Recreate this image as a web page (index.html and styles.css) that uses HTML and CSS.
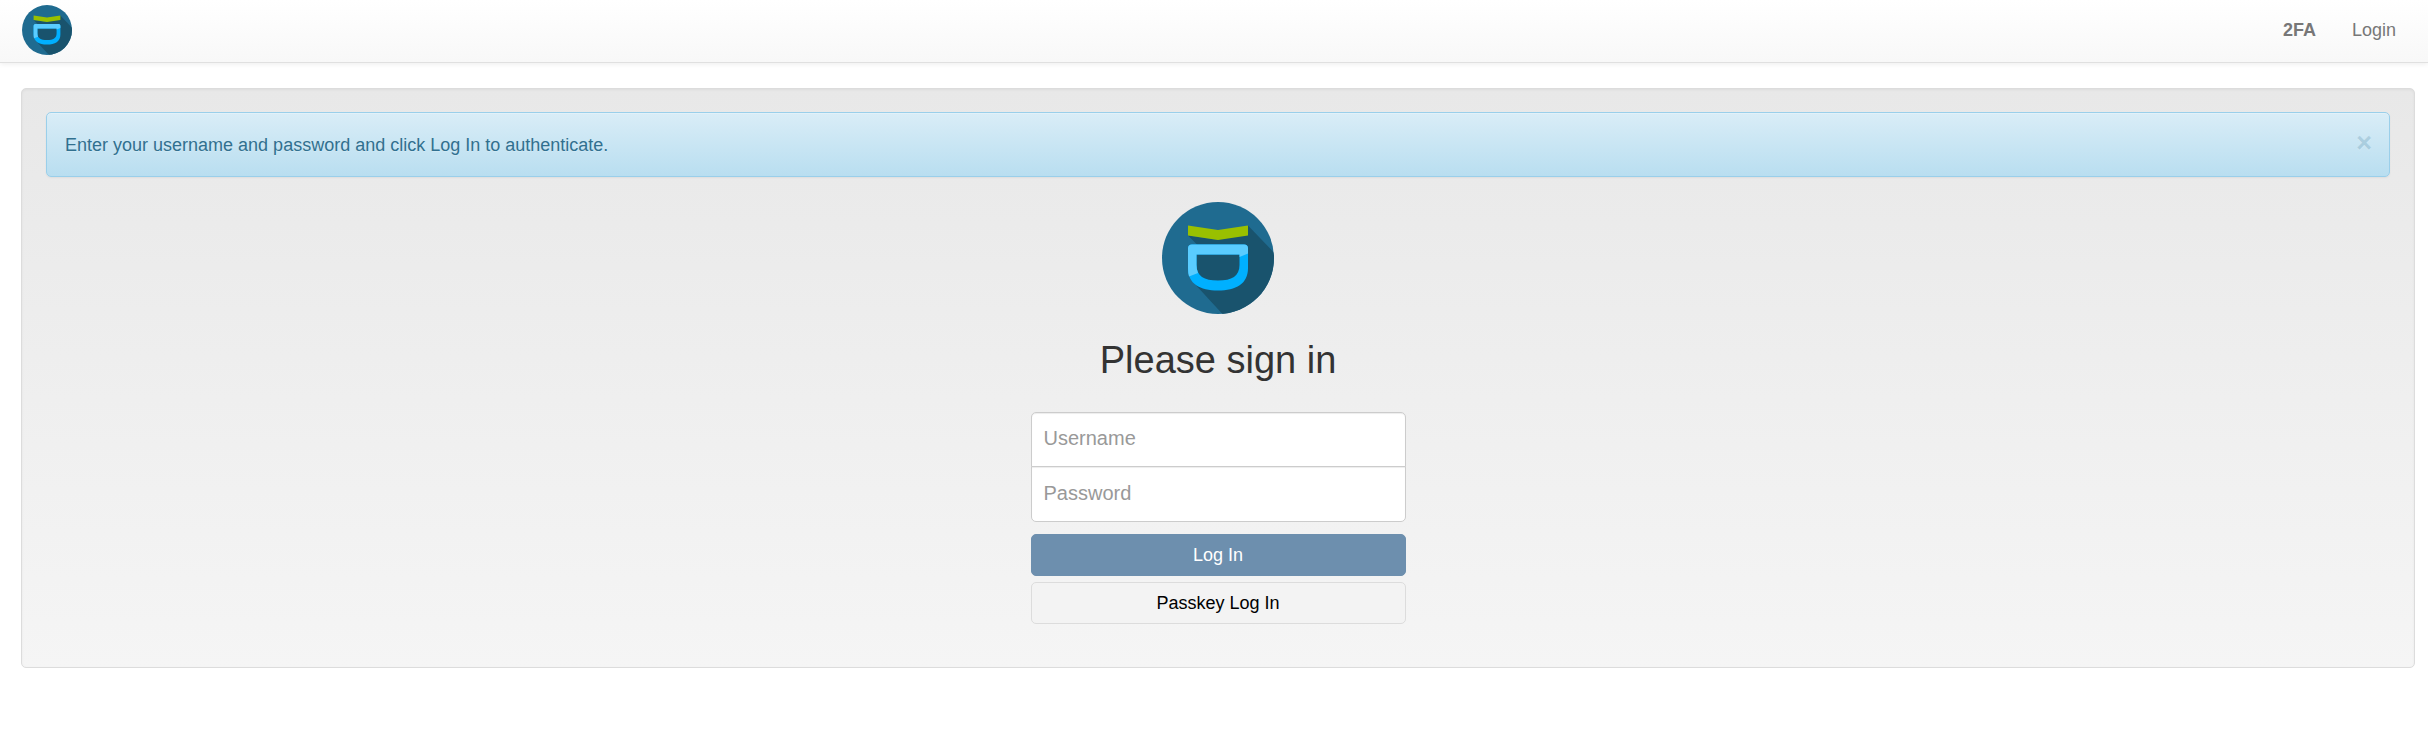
FILE: index.html
```html
<!DOCTYPE html>
<html lang="en">
<head>
    <meta charset="UTF-8">
    <meta name="viewport" content="width=device-width, initial-scale=1.0">
    <title>Please sign in</title>
    <link rel="stylesheet" href="styles.css">
</head>
<body>
    <svg class="sprite" aria-hidden="true">
        <symbol id="logo" viewBox="0 0 112 112">
            <clipPath id="disc"><circle cx="56" cy="56" r="56"/></clipPath>
            <g clip-path="url(#disc)">
                <rect width="112" height="112" fill="#1f6b90"/>
                <path d="M86 23.5L118 57V118H66L31 80V45L36 43.5L26 33.5L56 38Z" fill="#19536d"/>
            </g>
            <path d="M26 23.5L56 28L86 23.5V33.5L56 38L26 33.5Z" fill="#99c000"/>
            <path d="M30 42.500H82Q86 42.500 86 46.500V66C86 82 74 88.500 56 88.500S26 82 26 66V46.500Q26 42.500 30 42.500ZM34.500 52.500V63C34.500 74 42 78.500 56 78.500S77.500 74 77.500 63V52.500Z" fill="#00b0ff" fill-rule="evenodd"/>
            <path d="M30 42.500H82Q86 42.500 86 46.500V51.500L77.500 55V52.500H34.500V63Q34.500 67.500 36 71L27 74.500Q26 71 26 66V46.500Q26 42.500 30 42.500Z" fill="#5accff"/>
        </symbol>
    </svg>

    <nav class="navbar">
        <a class="brand" href="#" aria-label="Home"><svg><use href="#logo"/></svg></a>
        <div class="nav-links">
            <a href="#"><strong>2FA</strong></a>
            <a href="#">Login</a>
        </div>
    </nav>

    <main class="container">
        <div class="well">
            <div class="alert" role="alert">
                <span>Enter your username and password and click Log In to authenticate.</span>
                <button type="button" class="close" aria-label="Close">×</button>
            </div>

            <form class="form-signin">
                <svg class="logo"><use href="#logo"/></svg>
                <h2>Please sign in</h2>
                <input type="text" class="username" placeholder="Username" aria-label="Username">
                <input type="password" class="password" placeholder="Password" aria-label="Password">
                <button type="submit" class="btn btn-primary">Log In</button>
                <button type="button" class="btn btn-default">Passkey Log In</button>
            </form>
        </div>
    </main>
</body>
</html>
```
FILE: styles.css
```css
* {
  box-sizing: border-box;
}

body {
  margin: 0;
  font-family: "Liberation Sans", Arial, sans-serif;
  font-size: 18px;
  line-height: 24px;
  color: #333;
  background-color: #fff;
}

.sprite {
  position: absolute;
  width: 0;
  height: 0;
}

.navbar {
  display: flex;
  justify-content: space-between;
  align-items: center;
  padding: 5px 14px 7px 22px;
  border-bottom: 1px solid #e0e0e0;
  background-image: linear-gradient(#fff, #f8f8f8);
  box-shadow: 0 1px 5px rgba(0, 0, 0, 0.075);
}

.brand svg {
  display: block;
  width: 50px;
  height: 50px;
}

.nav-links {
  display: flex;
}

.nav-links a {
  padding: 0 18px;
  color: #777;
  text-decoration: none;
  text-shadow: 0 1px 0 rgba(255, 255, 255, 0.25);
}

.container {
  padding: 25px 13px 25px 21px;
}

.well {
  padding: 23px 24px 43px;
  border: 1px solid #dcdcdc;
  border-radius: 5px;
  background-image: linear-gradient(#e8e8e8, #f5f5f5);
  box-shadow: inset 0 1px 3px rgba(0, 0, 0, 0.05), 0 1px 0 rgba(255, 255, 255, 0.1);
}

.alert {
  display: flex;
  justify-content: space-between;
  align-items: flex-start;
  padding: 20px 17px 19px 18px;
  margin-bottom: 25px;
  border: 1px solid #9acfea;
  border-radius: 5px;
  color: #31708f;
  background-image: linear-gradient(#d9edf7, #b9def0);
  text-shadow: 0 1px 0 rgba(255, 255, 255, 0.2);
  box-shadow: inset 0 1px 0 rgba(255, 255, 255, 0.25), 0 1px 2px rgba(0, 0, 0, 0.05);
}

.close {
  padding: 0;
  border: 0;
  background: none;
  font-family: inherit;
  font-size: 27px;
  font-weight: bold;
  line-height: 20px;
  color: #31708f;
  text-shadow: 0 1px 0 #fff;
  opacity: 0.2;
  cursor: pointer;
}

.form-signin {
  display: flex;
  flex-direction: column;
  max-width: 375px;
  margin: 0 auto;
}

.logo {
  align-self: center;
  width: 112px;
  height: 112px;
}

h2 {
  margin: 25px 0 31px;
  font-size: 38px;
  font-weight: normal;
  line-height: 42px;
  text-align: center;
}

.form-signin input {
  height: 56px;
  padding: 12px 12px 14px;
  border: 1px solid #ccc;
  background-color: #fff;
  font-family: inherit;
  font-size: 20px;
  color: #555;
  box-shadow: inset 0 1px 1px rgba(0, 0, 0, 0.075);
}

.form-signin input::placeholder {
  color: #999;
}

.form-signin .username {
  height: 55px;
  margin-bottom: -1px;
  border-radius: 5px 5px 0 0;
}

.form-signin .password {
  margin-bottom: 12px;
  border-radius: 0 0 5px 5px;
}

.btn {
  height: 42px;
  padding: 0 12px;
  border: 1px solid #dcdcdc;
  border-radius: 5px;
  font-family: inherit;
  font-size: 18px;
  cursor: pointer;
}

.btn-primary {
  margin-bottom: 6px;
  border-color: #6d8fae;
  background-color: #6d8fae;
  color: #fff;
}

.btn-default {
  background-color: #f3f3f3;
  color: #000;
}
```
